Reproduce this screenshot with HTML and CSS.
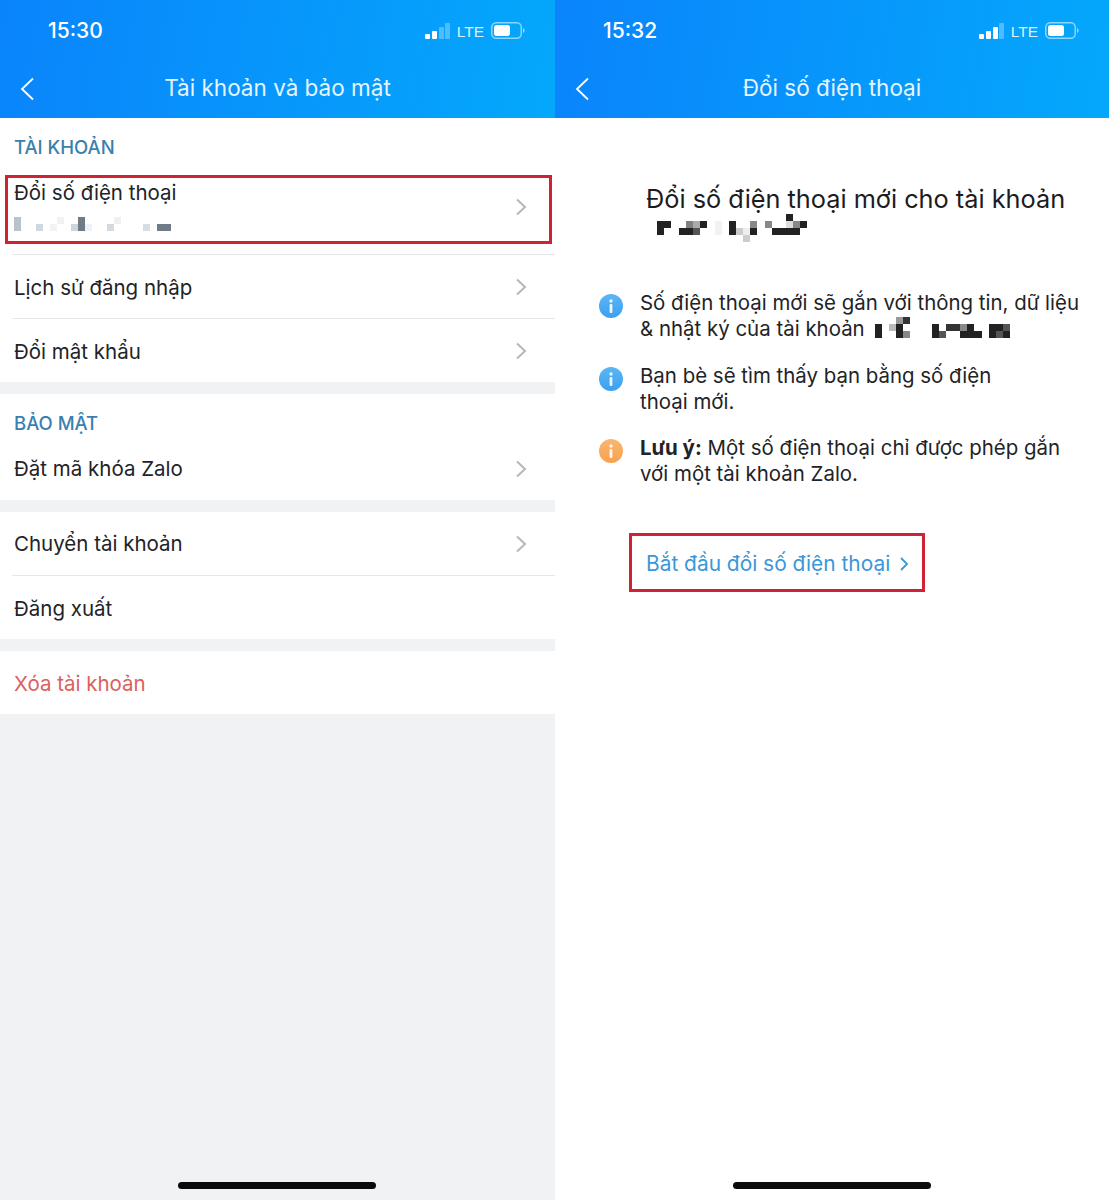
FILE: index.html
```html
<!DOCTYPE html>
<html lang="vi">
<head>
  <meta charset="UTF-8">
  <title>Tài khoản và bảo mật</title>
  <link rel="stylesheet" href="styles.css">
</head>
<body>
  <div class="screens">
    <!-- Left phone -->
    <section class="phone phone-left">
      <header class="top-bar">
        <div class="status">
          <span class="time">15:30</span>
          <div class="status-icons">
            <svg class="signal" width="25" height="16" viewBox="0 0 25 16"><rect x="0" y="11" width="5" height="5" rx="1" fill="#fff"/><rect x="7" y="8" width="5" height="8" rx="1" fill="#fff"/><rect x="14" y="4" width="5" height="12" rx="1" fill="#fff" opacity=".3"/><rect x="20" y="0" width="5" height="16" rx="1" fill="#fff" opacity=".3"/></svg>
            <span class="lte">LTE</span>
            <svg class="battery" width="34" height="17" viewBox="0 0 34 17"><rect x=".75" y=".75" width="29.5" height="15.5" rx="4.5" fill="none" stroke="#fff" stroke-opacity=".55" stroke-width="1.5"/><rect x="3" y="3" width="16" height="11" rx="2.5" fill="#fff"/><path d="M32 6v5c1-.4 1.700-1.400 1.700-2.500S33 6.400 32 6z" fill="#fff" fill-opacity=".55"/></svg>
          </div>
        </div>
        <div class="nav">
          <svg class="back" width="16" height="26" viewBox="0 0 16 26"><path d="M14 2.500 3 13l11 10.500" fill="none" stroke="#fff" stroke-width="1.800"/></svg>
          <h1>Tài khoản và bảo mật</h1>
        </div>
      </header>

      <div class="group">
        <h2 class="group-title">TÀI KHOẢN</h2>
        <div class="row row-phone">
          <div class="row-text">
            <span>Đổi số điện thoại</span>
            <svg class="mosaic" width="158" height="14" viewBox="0 0 158 14">
              <rect x="0" y="0" width="7" height="14" fill="#b9c3cb"/>
              <rect x="22" y="7" width="7" height="7" fill="#d0d7dd"/>
              <rect x="36" y="7" width="7" height="7" fill="#f0f4f7"/><rect x="43" y="0" width="7" height="7" fill="#eef3f7"/>
              <rect x="57" y="7" width="7" height="7" fill="#cdd5db"/><rect x="64" y="0" width="7" height="14" fill="#6f7c88"/><rect x="71" y="7" width="7" height="7" fill="#eef2f5"/>
              <rect x="93" y="7" width="7" height="7" fill="#d3dbe1"/><rect x="100" y="0" width="7" height="7" fill="#edf1f4"/>
              <rect x="129" y="7" width="7" height="7" fill="#d6dde3"/>
              <rect x="143" y="7" width="14" height="7" fill="#6f7c88"/>
            </svg>
          </div>
          <svg class="chevron" width="12" height="18" viewBox="0 0 12 18"><path d="M2 1.500 10 9l-8 7.500" fill="none" stroke="#b4b8bc" stroke-width="2"/></svg>
          <div class="red-box"></div>
        </div>
        <div class="row line">
          <span>Lịch sử đăng nhập</span>
          <svg class="chevron" width="12" height="18" viewBox="0 0 12 18"><path d="M2 1.500 10 9l-8 7.500" fill="none" stroke="#b4b8bc" stroke-width="2"/></svg>
        </div>
        <div class="row line">
          <span>Đổi mật khẩu</span>
          <svg class="chevron" width="12" height="18" viewBox="0 0 12 18"><path d="M2 1.500 10 9l-8 7.500" fill="none" stroke="#b4b8bc" stroke-width="2"/></svg>
        </div>
      </div>

      <div class="group">
        <h2 class="group-title title-small">BẢO MẬT</h2>
        <div class="row row-tight">
          <span>Đặt mã khóa Zalo</span>
          <svg class="chevron" width="12" height="18" viewBox="0 0 12 18"><path d="M2 1.500 10 9l-8 7.500" fill="none" stroke="#b4b8bc" stroke-width="2"/></svg>
        </div>
      </div>

      <div class="group">
        <div class="row row-tight">
          <span>Chuyển tài khoản</span>
          <svg class="chevron" width="12" height="18" viewBox="0 0 12 18"><path d="M2 1.500 10 9l-8 7.500" fill="none" stroke="#b4b8bc" stroke-width="2"/></svg>
        </div>
        <div class="row line">
          <span>Đăng xuất</span>
        </div>
      </div>

      <div class="group">
        <div class="row row-short danger"><span>Xóa tài khoản</span></div>
      </div>

      <div class="home-bar"></div>
    </section>

    <!-- Right phone -->
    <section class="phone phone-right">
      <header class="top-bar">
        <div class="status">
          <span class="time">15:32</span>
          <div class="status-icons">
            <svg class="signal" width="25" height="16" viewBox="0 0 25 16"><rect x="0" y="11" width="5" height="5" rx="1" fill="#fff"/><rect x="7" y="8" width="5" height="8" rx="1" fill="#fff"/><rect x="14" y="4" width="5" height="12" rx="1" fill="#fff"/><rect x="20" y="0" width="5" height="16" rx="1" fill="#fff" opacity=".3"/></svg>
            <span class="lte">LTE</span>
            <svg class="battery" width="34" height="17" viewBox="0 0 34 17"><rect x=".75" y=".75" width="29.5" height="15.5" rx="4.500" fill="none" stroke="#fff" stroke-opacity=".55" stroke-width="1.5"/><rect x="3" y="3" width="16" height="11" rx="2.500" fill="#fff"/><path d="M32 6v5c1-.4 1.700-1.400 1.700-2.500S33 6.400 32 6z" fill="#fff" fill-opacity=".55"/></svg>
          </div>
        </div>
        <div class="nav">
          <svg class="back" width="16" height="26" viewBox="0 0 16 26"><path d="M14 2.500 3 13l11 10.500" fill="none" stroke="#fff" stroke-width="1.800"/></svg>
          <h1>Đổi số điện thoại</h1>
        </div>
      </header>

      <div class="change">
        <h2 class="change-title">Đổi số điện thoại mới cho tài khoản</h2>
        <svg class="mosaic-title" width="150" height="28" viewBox="0 0 150 28">
          <rect x="0" y="7" width="7" height="14" fill="#222"/><rect x="7" y="7" width="7" height="7" fill="#222"/>
          <rect x="22" y="14" width="14" height="7" fill="#222"/><rect x="29" y="7" width="7" height="7" fill="#808080"/><rect x="36" y="7" width="7" height="7" fill="#aaa"/><rect x="36" y="14" width="7" height="7" fill="#555"/><rect x="43" y="7" width="7" height="7" fill="#222"/>
          <rect x="58" y="7" width="7" height="14" fill="#f2f2f2"/>
          <rect x="72" y="7" width="7" height="14" fill="#222"/><rect x="79" y="14" width="7" height="7" fill="#ccc"/><rect x="86" y="14" width="7" height="7" fill="#eee"/><rect x="86" y="21" width="7" height="7" fill="#ccc"/><rect x="93" y="7" width="7" height="7" fill="#888"/><rect x="93" y="14" width="7" height="7" fill="#222"/>
          <rect x="108" y="7" width="7" height="7" fill="#888"/><rect x="115" y="14" width="28" height="7" fill="#222"/><rect x="129" y="0" width="7" height="7" fill="#222"/><rect x="129" y="7" width="7" height="7" fill="#ddd"/><rect x="136" y="7" width="7" height="7" fill="#888"/><rect x="143" y="7" width="7" height="7" fill="#222"/>
        </svg>

        <div class="note">
          <svg class="note-icon" width="24" height="24" viewBox="0 0 24 24"><defs><linearGradient id="blue" x1="0" y1="0" x2="0" y2="1"><stop offset="0" stop-color="#5ab6f5"/><stop offset="1" stop-color="#3d9ff0"/></linearGradient><linearGradient id="orange" x1="0" y1="0" x2="0" y2="1"><stop offset="0" stop-color="#fbb66e"/><stop offset="1" stop-color="#f7a24f"/></linearGradient></defs><circle cx="12" cy="12" r="12" fill="url(#blue)"/><circle cx="12" cy="7" r="1.700" fill="#fff" fill-opacity=".9"/><rect x="10.600" y="10" width="2.800" height="9" rx="1" fill="#fff" fill-opacity=".9"/></svg>
          <p>Số điện thoại mới sẽ gắn với thông tin, dữ liệu<br>&amp; nhật ký của tài khoản
            <svg class="mosaic-inline" width="136" height="21" viewBox="0 0 136 21">
              <rect x="0" y="7" width="7" height="14" fill="#222"/>
              <rect x="14" y="7" width="7" height="7" fill="#bbb"/><rect x="21" y="0" width="7" height="7" fill="#999"/><rect x="28" y="0" width="7" height="7" fill="#333"/><rect x="21" y="7" width="7" height="14" fill="#222"/><rect x="28" y="14" width="7" height="7" fill="#888"/>
              <rect x="57" y="7" width="7" height="14" fill="#222"/><rect x="64" y="14" width="7" height="7" fill="#555"/><rect x="71" y="7" width="14" height="7" fill="#333"/><rect x="85" y="7" width="7" height="7" fill="#888"/><rect x="92" y="7" width="7" height="7" fill="#222"/><rect x="85" y="14" width="22" height="7" fill="#222"/>
              <rect x="114" y="7" width="14" height="7" fill="#222"/><rect x="114" y="14" width="7" height="7" fill="#222"/><rect x="121" y="14" width="7" height="7" fill="#555"/><rect x="128" y="7" width="7" height="7" fill="#555"/><rect x="128" y="14" width="7" height="7" fill="#222"/>
            </svg></p>
        </div>

        <div class="note">
          <svg class="note-icon" width="24" height="24" viewBox="0 0 24 24"><circle cx="12" cy="12" r="12" fill="url(#blue)"/><circle cx="12" cy="7" r="1.700" fill="#fff" fill-opacity=".9"/><rect x="10.600" y="10" width="2.800" height="9" rx="1" fill="#fff" fill-opacity=".9"/></svg>
          <p>Bạn bè sẽ tìm thấy bạn bằng số điện<br>thoại mới.</p>
        </div>

        <div class="note">
          <svg class="note-icon" width="24" height="24" viewBox="0 0 24 24"><circle cx="12" cy="12" r="12" fill="url(#orange)"/><circle cx="12" cy="7" r="1.700" fill="#fff" fill-opacity=".9"/><rect x="10.600" y="10" width="2.800" height="9" rx="1" fill="#fff" fill-opacity=".9"/></svg>
          <p><b>Lưu ý:</b> Một số điện thoại chỉ được phép gắn<br>với một tài khoản Zalo.</p>
        </div>

        <a class="start-link" href="#">Bắt đầu đổi số điện thoại
          <svg width="10" height="16" viewBox="0 0 10 16"><path d="M2 2l6 6-6 6" fill="none" stroke="#3a97d8" stroke-width="1.800"/></svg>
        </a>
      </div>

      <div class="home-bar"></div>
    </section>
  </div>
</body>
</html>
```

FILE: styles.css
```css
/* Basic Reset */
* {
  box-sizing: border-box;
  margin: 0;
  padding: 0;
}

body {
  font-family: Inter, "Noto Sans", sans-serif;
  color: #222326;
  background: #fff;
}

.screens {
  display: grid;
  grid-template-columns: 555px 554px;
  height: 1200px;
  overflow: hidden;
}

.phone {
  position: relative;
  display: flex;
  flex-direction: column;
  height: 1200px;
}

.phone-left {
  background: #f1f2f4;
}

.phone-right {
  background: #fff;
}

/* Top Bar */
.top-bar {
  height: 118px;
  flex-shrink: 0;
  color: #fff;
  background: linear-gradient(100deg, #0a84fb, #04a8fb);
}

.status {
  height: 60px;
  display: flex;
  justify-content: space-between;
  align-items: center;
  padding: 0 30px 0 48px;
}

.time {
  font-size: 21px;
  font-weight: 500;
}

.status-icons {
  display: flex;
  align-items: center;
  gap: 7px;
}

.signal {
  margin-top: 2px;
}

.lte {
  margin-top: 3px;
  font-family: "Liberation Sans", sans-serif;
  font-size: 15.5px;
  opacity: 0.85;
}

.nav {
  position: relative;
  height: 58px;
  padding-bottom: 3px;
  display: flex;
  align-items: center;
  justify-content: center;
}

.nav h1 {
  font-size: 22.5px;
  font-weight: 400;
  opacity: 0.9;
}

.back {
  position: absolute;
  left: 19px;
  top: 16px;
}

/* List groups */
.group {
  background: #fff;
}

.group + .group {
  margin-top: 12px;
}

.group-title {
  height: 57px;
  padding: 18px 14px 0;
  font-size: 18.5px;
  font-weight: 500;
  color: #3a7fae;
}

.title-small {
  height: 43px;
  padding-top: 18px;
}

.row {
  height: 64px;
  display: flex;
  align-items: center;
  justify-content: space-between;
  padding: 2px 28px 0 14px;
  font-size: 20.5px;
  position: relative;
}

.row-short {
  height: 63px;
}

.row-tight {
  height: 63px;
  padding-top: 0;
}

.row.line::before {
  content: "";
  position: absolute;
  left: 12px;
  right: 0;
  top: 0;
  height: 1px;
  background: #e6e7e9;
}

.row-phone {
  height: 79px;
  align-items: flex-start;
  padding-top: 6px;
}

.row-text {
  display: flex;
  flex-direction: column;
  gap: 12px;
}

.row-text span {
  line-height: 24px;
}

.row-phone .chevron {
  margin-top: 17px;
}

.mosaic {
  display: block;
}

.red-box {
  position: absolute;
  left: 5px;
  top: 0;
  width: 547px;
  height: 69px;
  border: 3px solid #cf2333;
}

.danger {
  color: #d9615f;
}

/* Right phone content */
.change {
  padding-top: 62px;
}

.change-title {
  margin-left: 91px;
  font-size: 25.3px;
  font-weight: 400;
  line-height: 38px;
  color: #1c1c1e;
}

.mosaic-title {
  display: block;
  margin: -4px 0 48px 102px;
}

.note {
  display: flex;
  gap: 17px;
  margin: 0 0 20.5px 44px;
}

.note-icon {
  flex-shrink: 0;
  margin-top: 4px;
}

.note p {
  font-size: 20.45px;
  line-height: 26px;
}

.mosaic-inline {
  margin-left: 5px;
  vertical-align: -2px;
}

.start-link {
  width: 296px;
  height: 59px;
  margin: 46px 0 0 74px;
  display: flex;
  align-items: center;
  gap: 9px;
  padding: 2px 0 0 14px;
  border: 3px solid #cf2333;
  color: #3a97d8;
  font-size: 20.9px;
  text-decoration: none;
}

/* Home indicator */
.home-bar {
  position: absolute;
  left: 178px;
  bottom: 11px;
  width: 198px;
  height: 7px;
  border-radius: 4px;
  background: #0b0b0b;
}
```
